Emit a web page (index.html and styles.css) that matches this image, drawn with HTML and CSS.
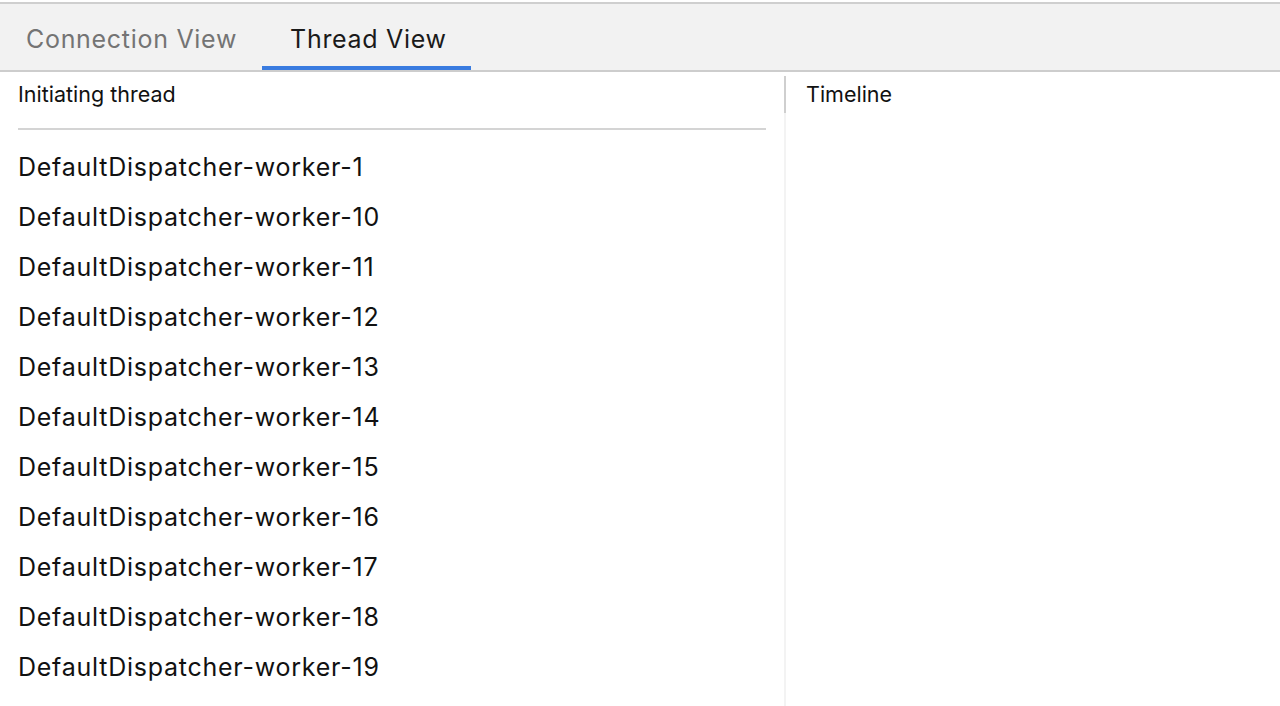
FILE: index.html
```html
<!DOCTYPE html>
<html>
<head>
<meta charset="utf-8">
<link rel="stylesheet" href="styles.css">
</head>
<body>
<div class="app">
  <div class="tabbar">
    <div class="tab">Connection View</div>
    <div class="tab active">Thread View</div>
  </div>
  <div class="content">
    <div class="col-left">
      <div class="header">Initiating thread</div>
      <div class="rows">
        <div class="row">DefaultDispatcher-worker-1</div>
        <div class="row">DefaultDispatcher-worker-10</div>
        <div class="row">DefaultDispatcher-worker-11</div>
        <div class="row">DefaultDispatcher-worker-12</div>
        <div class="row">DefaultDispatcher-worker-13</div>
        <div class="row">DefaultDispatcher-worker-14</div>
        <div class="row">DefaultDispatcher-worker-15</div>
        <div class="row">DefaultDispatcher-worker-16</div>
        <div class="row">DefaultDispatcher-worker-17</div>
        <div class="row">DefaultDispatcher-worker-18</div>
        <div class="row">DefaultDispatcher-worker-19</div>
      </div>
    </div>
    <div class="divider"></div>
    <div class="col-right">
      <div class="header">Timeline</div>
    </div>
  </div>
</div>
</body>
</html>
```
FILE: styles.css
```css
* { box-sizing: border-box; }
html, body { margin: 0; padding: 0; background: #fff; }
body {
  font-family: Inter, "Noto Sans", sans-serif;
  color: #111;
  width: 1280px;
  height: 706px;
  overflow: hidden;
}
.app { display: flex; flex-direction: column; height: 706px; }
.tabbar {
  margin-top: 2px;
  border-top: 2px solid #cfcfcf;
  border-bottom: 2px solid #cdcdcd;
  background: #f2f2f2;
  height: 70px;
  display: flex;
  align-items: stretch;
}
.tab {
  font-size: 25px;
  letter-spacing: 0.7px;
  color: #747474;
  padding: 7px 25px 0 26px;
  display: flex;
  align-items: center;
  border-bottom: 4px solid transparent;
}
.tab.active {
  color: #1a1a1a;
  border-bottom-color: #3a7ce0;
  padding: 7px 24px 0 28px;
}
.content { flex: 1; display: flex; }
.col-left { width: 784px; padding-left: 18px; padding-right: 18px; }
.header {
  font-size: 21.5px;
  height: 44px;
  padding-top: 9px;
  line-height: 26px;
}
.col-left .header {
  border-bottom: 2px solid #d4d4d4;
  height: 58px;
}
.rows { padding-top: 12px; }
.row {
  font-size: 25px;
  letter-spacing: 0.75px;
  height: 50px;
  line-height: 50px;
}
.divider {
  width: 2px;
  background: #f3f3f3;
  position: relative;
  margin-top: 4px;
}
.divider::before {
  content: "";
  position: absolute;
  left: 0; top: 0;
  width: 2px; height: 37px;
  background: #cfcfcf;
}
.col-right { flex: 1; padding-left: 20px; }
```
